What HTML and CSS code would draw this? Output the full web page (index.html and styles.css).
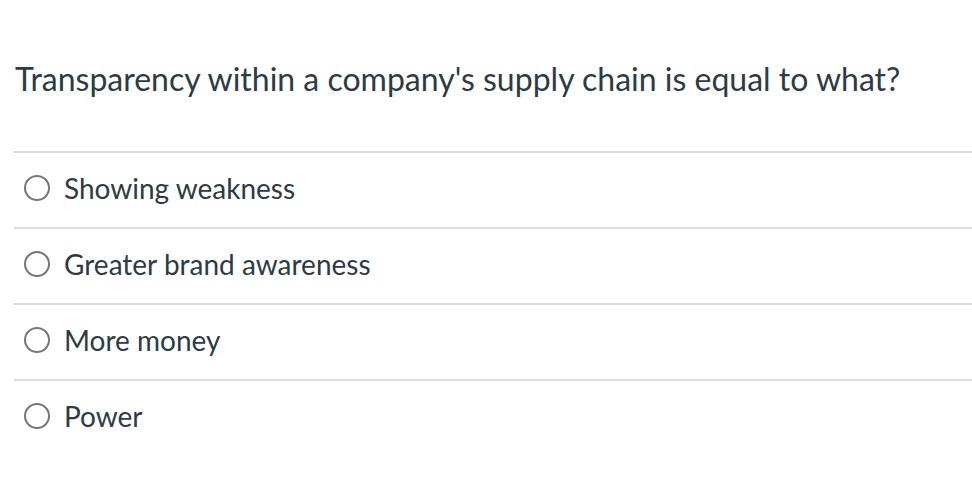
FILE: index.html
```html
<!DOCTYPE html>
<html>
<head>
<meta charset="utf-8">
<link rel="stylesheet" href="styles.css">
</head>
<body>
<div class="quiz">
  <h1 class="question">Transparency within a company's supply chain is equal to what?</h1>
  <ul class="answers">
    <li class="answer"><span class="radio"></span><span class="label">Showing weakness</span></li>
    <li class="answer"><span class="radio"></span><span class="label">Greater brand awareness</span></li>
    <li class="answer"><span class="radio"></span><span class="label">More money</span></li>
    <li class="answer"><span class="radio"></span><span class="label">Power</span></li>
  </ul>
</div>
</body>
</html>
```

FILE: styles.css
```css
html, body {
  margin: 0;
  padding: 0;
  background: #ffffff;
}
body {
  font-family: Lato, "Noto Sans", sans-serif;
  color: #2d3b45;
}
.quiz {
  padding: 0 0 0 14px;
}
.question {
  margin: 0;
  padding: 57px 0 0 1px;
  font-size: 32px;
  font-weight: 400;
  line-height: 44px;
  height: 94px;
}
.answers {
  list-style: none;
  margin: 0;
  padding: 0;
}
.answer {
  display: flex;
  align-items: center;
  gap: 14px;
  height: 70px;
  padding-bottom: 4px;
  border-top: 2px solid #dcdcdc;
  padding-left: 10px;
  font-size: 28px;
}
.radio {
  width: 22px;
  height: 22px;
  border: 2px solid #767676;
  border-radius: 50%;
  flex: none;
}
.label {
  line-height: 34px;
}
```
